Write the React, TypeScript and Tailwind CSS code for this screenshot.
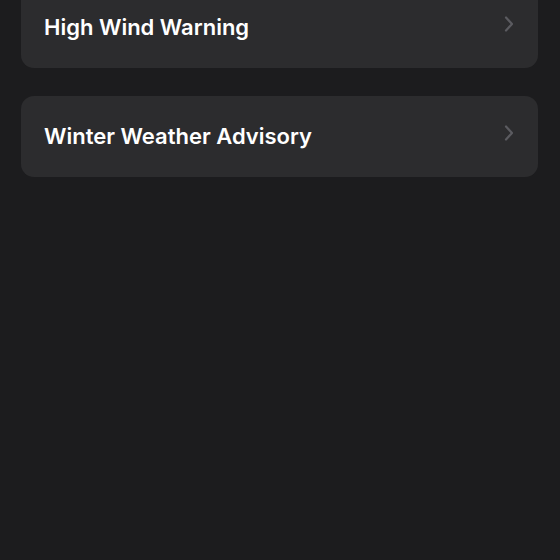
import React from 'react';

const ALERTS = ['High Wind Warning', 'Winter Weather Advisory'];

const Chevron = () => (
  <svg width="10" height="16" viewBox="0 0 10 16" fill="none" className="-mt-[7px] shrink-0">
    <path d="M2 1.5L8 8L2 14.5" stroke="#5b5b60" strokeWidth="2.2" strokeLinecap="round" strokeLinejoin="round" />
  </svg>
);

export default function App() {
  return (
    <div className="w-[560px] h-[560px] overflow-hidden bg-[#1c1c1e] pl-[21px] pr-[22px]" style={{ fontFamily: 'Inter, "Noto Sans", sans-serif' }}>
      <div className="-mt-[13px] flex flex-col gap-[28px]">
        {ALERTS.map(name => (
          <div key={name} className="h-[81px] rounded-[13px] bg-[#2c2c2e] flex items-center justify-between pl-[23px] pr-[24px]">
            <span className="text-[22px] font-semibold text-white">{name}</span>
            <Chevron />
          </div>
        ))}
      </div>
    </div>
  );
}
